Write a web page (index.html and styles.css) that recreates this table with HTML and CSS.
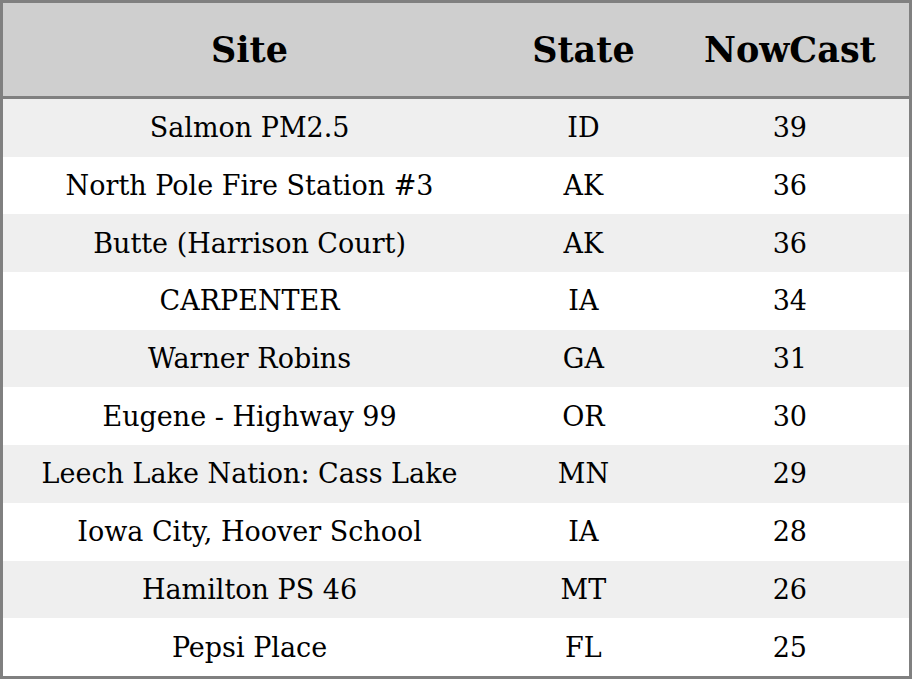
FILE: index.html
```html
<!DOCTYPE html>
<html>
<head>
<meta charset="utf-8">
<link rel="stylesheet" href="styles.css">
</head>
<body>
<table class="grid">
  <colgroup>
    <col class="c-site">
    <col class="c-state">
    <col class="c-now">
  </colgroup>
  <thead>
    <tr><th>Site</th><th>State</th><th>NowCast</th></tr>
  </thead>
  <tbody>
    <tr><td>Salmon PM2.5</td><td>ID</td><td>39</td></tr>
    <tr><td>North Pole Fire Station #3</td><td>AK</td><td>36</td></tr>
    <tr><td>Butte (Harrison Court)</td><td>AK</td><td>36</td></tr>
    <tr><td>CARPENTER</td><td>IA</td><td>34</td></tr>
    <tr><td>Warner Robins</td><td>GA</td><td>31</td></tr>
    <tr><td>Eugene - Highway 99</td><td>OR</td><td>30</td></tr>
    <tr><td>Leech Lake Nation: Cass Lake</td><td>MN</td><td>29</td></tr>
    <tr><td>Iowa City, Hoover School</td><td>IA</td><td>28</td></tr>
    <tr><td>Hamilton PS 46</td><td>MT</td><td>26</td></tr>
    <tr><td>Pepsi Place</td><td>FL</td><td>25</td></tr>
  </tbody>
</table>
</body>
</html>
```
FILE: styles.css
```css
html, body {
  margin: 0;
  padding: 0;
  background: #ffffff;
}
.grid {
  width: 912px;
  height: 679px;
  border-collapse: collapse;
  border: 3px solid #808080;
  table-layout: fixed;
  font-family: "DejaVu Serif", serif;
  color: #000;
}
.c-site { width: 493px; }
.c-state { width: 174px; }
.c-now { width: 239px; }
.grid th {
  background: #cfcfcf;
  height: 93px;
  padding: 0;
  font-size: 35px;
  font-weight: bold;
  text-align: center;
  border-bottom: 3px solid #808080;
}
.grid td {
  padding: 0;
  height: 57px;
  font-size: 27px;
  text-align: center;
}
.grid tbody tr:nth-child(odd) td {
  background: #efefef;
}
```
